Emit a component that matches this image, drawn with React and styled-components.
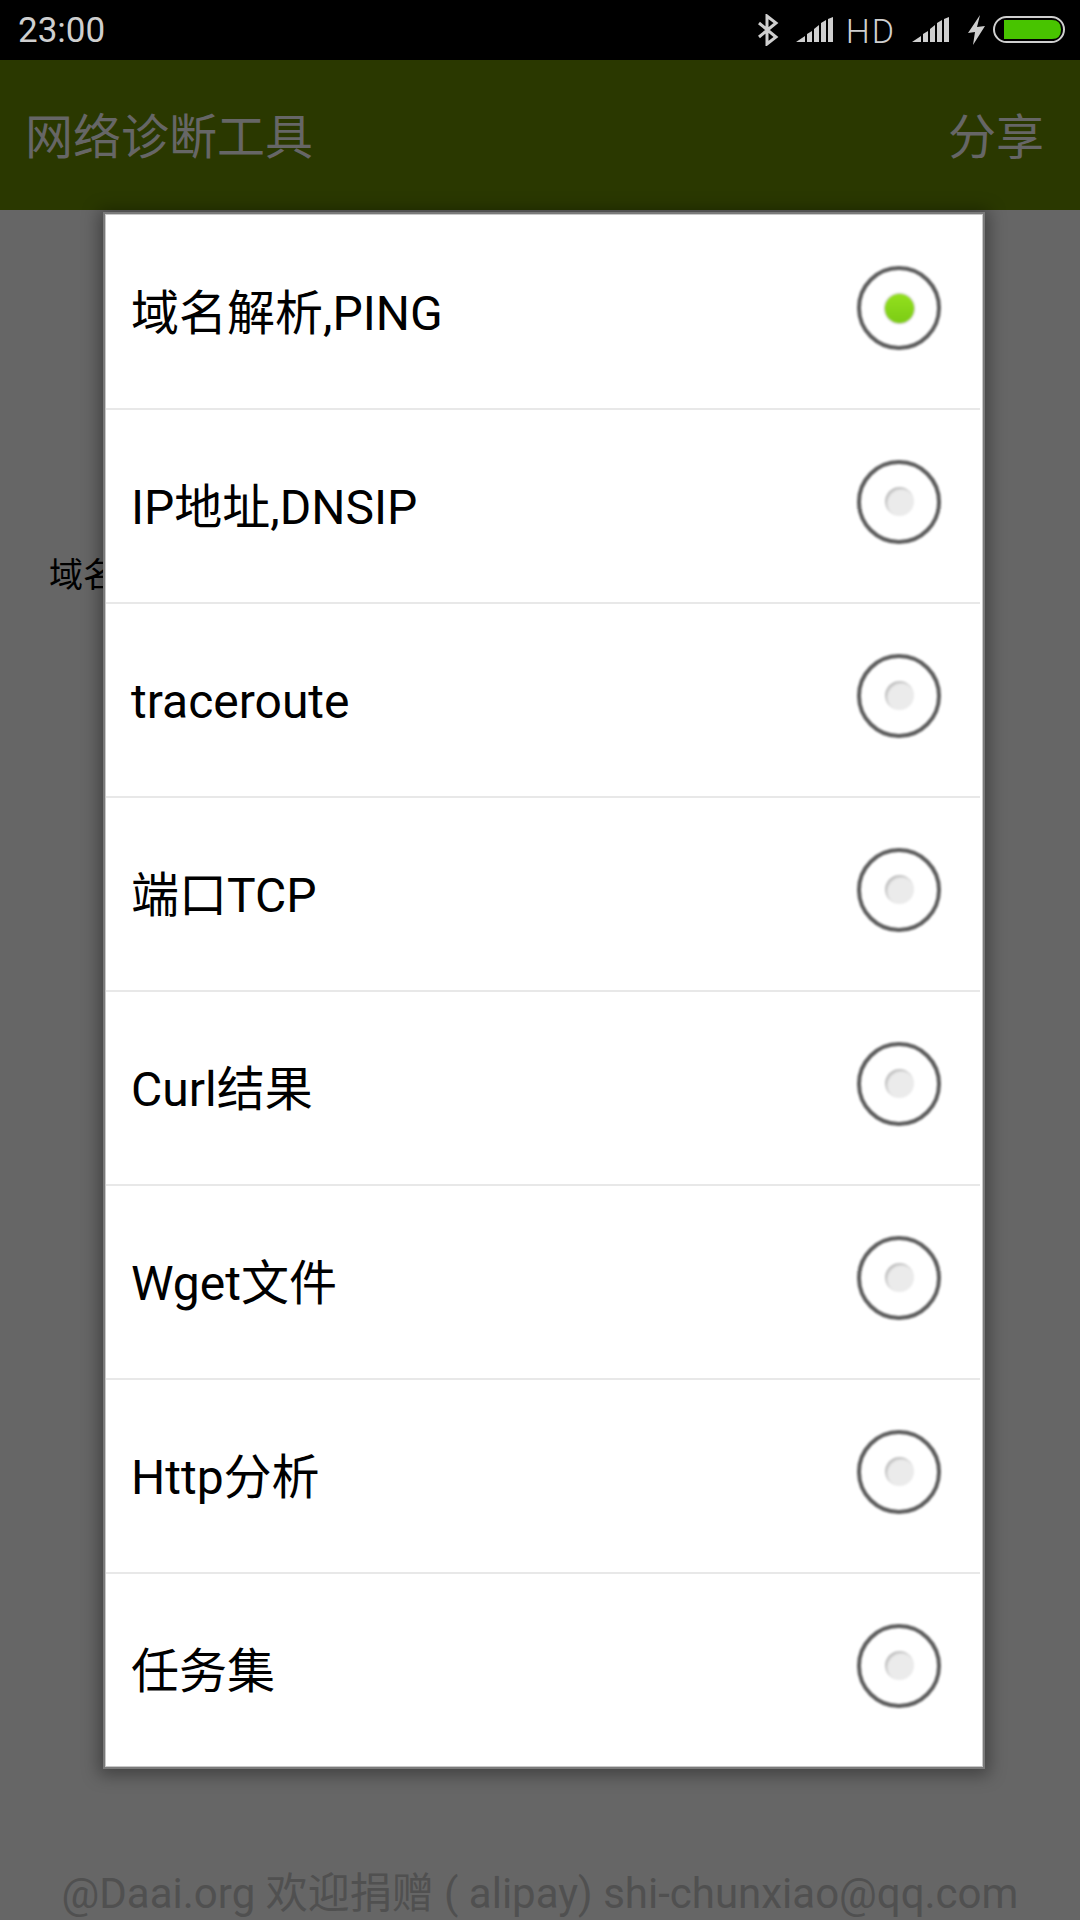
import React from "react";
import styled, { createGlobalStyle } from "styled-components";

const GlobalStyle = createGlobalStyle`
  html, body {
    margin: 0;
    padding: 0;
    background: #666666;
    font-family: Roboto, "Noto Sans CJK SC", sans-serif;
  }
`;

const Screen = styled.div`
  position: relative;
  width: 1080px;
  height: 1920px;
  overflow: hidden;
  display: flex;
  flex-direction: column;
  background: #666666;
`;

const StatusBar = styled.div`
  height: 60px;
  flex-shrink: 0;
  box-sizing: border-box;
  background: #000;
  color: #cfcfcf;
  display: flex;
  align-items: center;
  justify-content: space-between;
  padding: 0 15px 0 18px;
`;

const Clock = styled.div`
  font-size: 35px;
  line-height: 60px;
  padding-top: 2px;
`;

const StatusIcons = styled.div`
  display: flex;
  align-items: center;
`;

const NetworkLabel = styled.span`
  font-size: 34px;
  font-weight: 300;
  letter-spacing: 2px;
  line-height: 60px;
  padding-top: 2px;
  margin: 0 16px 0 12px;
`;

const AppBar = styled.div`
  height: 150px;
  flex-shrink: 0;
  box-sizing: border-box;
  background: #2a3800;
  color: #666666;
  display: flex;
  align-items: center;
  justify-content: space-between;
  padding: 0 36px 4px 25px;
  font-size: 48px;
`;

const Body = styled.div`
  flex: 1;
  display: flex;
  flex-direction: column;
  justify-content: space-between;
`;

const FieldLabel = styled.div`
  margin: 345px 0 0 49px;
  font-size: 34px;
  line-height: 40px;
  color: #000;
`;

const Footer = styled.div`
  text-align: center;
  font-size: 42px;
  line-height: 60px;
  color: #505050;
  margin-bottom: -4px;
`;

const Dialog = styled.div`
  position: absolute;
  left: 105px;
  top: 214px;
  width: 878px;
  box-sizing: border-box;
  padding-top: 1px;
  background: #fff;
  border: 1px solid #c8c8c8;
  box-shadow: 0 0 0 2px #7a7a7a, 0 2px 16px 6px rgba(0, 0, 0, 0.36);
`;

const Option = styled.div`
  height: ${(p) => (p.$last ? 192 : 194)}px;
  box-sizing: border-box;
  margin-right: 2px;
  display: flex;
  align-items: center;
  justify-content: space-between;
  padding: 0 39px 0 25px;
  border-bottom: ${(p) => (p.$last ? "none" : "2px solid #e8e8e8")};
`;

const OptionLabel = styled.div`
  font-size: 48px;
  line-height: 60px;
  padding-top: 3px;
  color: #000;
`;

const Radio = styled.div`
  width: 84px;
  height: 84px;
  box-sizing: border-box;
  margin-top: -8px;
  border: 4px solid #5c5c5c;
  border-radius: 50%;
  display: flex;
  align-items: center;
  justify-content: center;
  background: #fff;
  filter: blur(0.8px);
`;

const RadioDot = styled.div`
  width: 29px;
  height: 29px;
  margin-top: ${(p) => (p.$checked ? 0 : -2)}px;
  border-radius: 50%;
  background: ${(p) =>
    p.$checked ? "linear-gradient(#93e01e, #7ccc14)" : "#ebebeb"};
  box-shadow: ${(p) =>
    p.$checked
      ? "0 0 1px 1px rgba(90, 90, 90, 0.35)"
      : "inset 2px 2px 2px rgba(0, 0, 0, 0.18)"};
`;

const BluetoothIcon = () => (
  <svg width="22" height="32" viewBox="0 0 22 32" style={{ marginRight: 17 }}>
    <path
      d="M2 9 L19 23 L10 30 L10 2 L19 9 L2 23"
      fill="none"
      stroke="#cfcfcf"
      strokeWidth="3"
    />
  </svg>
);

const SignalIcon = () => (
  <svg width="38" height="26" viewBox="0 0 38 26">
    <path
      d="M0 25 L9 19 L9 25 Z M11 17 L16 14 L16 25 L11 25 Z M18 12 L23 8 L23 25 L18 25 Z M25 6 L30 3 L30 25 L25 25 Z M32 2 L37 0 L37 25 L32 25 Z"
      fill="#cfcfcf"
    />
  </svg>
);

const BoltIcon = () => (
  <svg width="18" height="30" viewBox="0 0 18 30" style={{ margin: "0 7px 0 18px" }}>
    <path d="M12 0 L0 18 L7 17 L5 30 L17 11 L9 12 Z" fill="#cfcfcf" />
  </svg>
);

const BatteryIcon = () => (
  <svg width="72" height="28" viewBox="0 0 72 28">
    <rect x="1" y="1" width="70" height="25" rx="12.5" fill="none" stroke="#cfcfcf" strokeWidth="2" />
    <path d="M11 4 H59 Q68 4 68 13.5 Q68 23 59 23 H11 Z" fill="#48c400" />
  </svg>
);

const options = [
  "域名解析,PING",
  "IP地址,DNSIP",
  "traceroute",
  "端口TCP",
  "Curl结果",
  "Wget文件",
  "Http分析",
  "任务集",
];

export default function App() {
  return (
    <>
      <GlobalStyle />
      <Screen>
        <StatusBar>
          <Clock>23:00</Clock>
          <StatusIcons>
            <BluetoothIcon />
            <SignalIcon />
            <NetworkLabel>HD</NetworkLabel>
            <SignalIcon />
            <BoltIcon />
            <BatteryIcon />
          </StatusIcons>
        </StatusBar>
        <AppBar>
          <span>网络诊断工具</span>
          <span>分享</span>
        </AppBar>
        <Body>
          <FieldLabel>域名</FieldLabel>
          <Footer>@Daai.org 欢迎捐赠 ( alipay) shi-chunxiao@qq.com</Footer>
        </Body>
        <Dialog>
          {options.map((label, i) => (
            <Option key={label} $last={i === options.length - 1}>
              <OptionLabel>{label}</OptionLabel>
              <Radio>
                <RadioDot $checked={i === 0} />
              </Radio>
            </Option>
          ))}
        </Dialog>
      </Screen>
    </>
  );
}
